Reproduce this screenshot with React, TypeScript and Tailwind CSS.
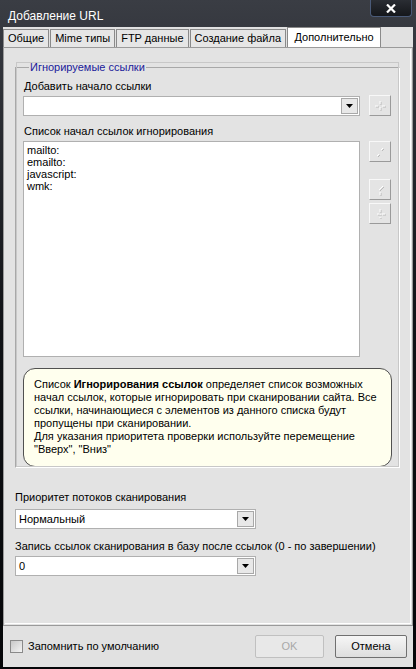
import React from "react";

const font = { fontFamily: '"Liberation Sans", "DejaVu Sans", sans-serif' };

function Arrow() {
	return (
		<svg width="7" height="4" viewBox="0 0 7 4">
			<path d="M0 0h7L3.5 4z" fill="#000" />
		</svg>
	);
}

function Combo({ value = "", width }: { value?: string; width: string }) {
	return (
		<div
			className={`${width} h-[20px] border border-[#b0b0b0] bg-white flex items-center p-[1px]`}
		>
			<div className="flex-1 pl-[2px] text-[11px] text-black">{value}</div>
			<div className="w-[17px] h-[16px] bg-[#e8e8e8] border border-[#a8a8a8] flex items-center justify-center">
				<Arrow />
			</div>
		</div>
	);
}

function ToolButton({ d }: { d: string }) {
	return (
		<div className="w-[22px] h-[21px] bg-[#e4e4e4] border border-t-[#f8f8f8] border-l-[#f8f8f8] border-r-[#9a9a9a] border-b-[#9a9a9a] flex items-center justify-center">
			<svg width="14" height="14" viewBox="0 0 14 14">
				<path d={d} stroke="#b8b8b8" strokeWidth="1" fill="none" transform="translate(1 1)" />
				<path d={d} stroke="#ffffff" strokeWidth="1" fill="none" />
			</svg>
		</div>
	);
}

const tabs = ["Общие", "Mime типы", "FTP данные", "Создание файла"];

export default function App() {
	return (
		<div
			className="w-[416px] h-[669px] bg-gradient-to-b from-[#3a3d44] via-[#101216] to-[#050608] flex flex-col text-[11px] leading-[13px]"
			style={font}
		>
			{/* title bar */}
			<div className="h-[27px] flex items-start shrink-0">
				<div className="pl-[8px] pt-[9px] text-white text-[12px] leading-[14px]">
					Добавление URL
				</div>
				<div className="ml-auto mr-[4px] w-[42px] h-[17px] rounded-b-[4px] border border-t-0 border-[#4a5a78] bg-gradient-to-b from-[#2a2d33] to-[#15171b] flex items-center justify-center">
					<svg width="10" height="9" viewBox="0 0 10 9">
						<path d="M1 0.5l8 8M9 0.5l-8 8" stroke="#fff" strokeWidth="2.2" />
					</svg>
				</div>
			</div>

			{/* body */}
			<div className="flex-1 mx-[3px] mb-[2px] bg-[#e1e1e1] flex flex-col">
				{/* tabs */}
				<div className="h-[20px] flex items-end shrink-0">
					{tabs.map((t) => (
						<div
							key={t}
							className="h-[18px] px-[4px] mr-[1px] bg-[#e6e6e6] border border-b-0 border-[#8a8a8a] flex items-center text-black"
						>
							{t}
						</div>
					))}
					<div className="h-[20px] w-[94px] bg-white border border-b-0 border-[#8a8a8a] flex items-start justify-center pt-[3px] text-black">
						Дополнительно
					</div>
				</div>

				{/* panel */}
				<div className="h-[579px] border border-[#9a9a9a] bg-[#e3e3e3] shrink-0 p-[1px]">
					<div className="h-full border border-white border-t-0 border-l-0 flex flex-col pl-[10px]">
						<fieldset className="mt-[12px] w-[385px] h-[407px] border border-t-[#a8a8a8] border-l-[#a8a8a8] border-r-white border-b-white outline outline-1 outline-offset-[-2px] outline-[#c8c8c8] pl-[7px] pr-[7px]">
							<legend className="ml-[6px] px-[1px] text-[#1a1a9a]">
								Игнорируемые ссылки
							</legend>
							<div className="mt-[6px] pl-[1px] text-black">Добавить начало ссылки</div>
							<div className="mt-[3px] flex items-start">
								<Combo width="w-[337px]" />
								<div className="ml-[9px] -mt-[1px]">
									<ToolButton d="M7 2v3M7 8v3M2 7h3M9 7h3" />
								</div>
							</div>
							<div className="mt-[9px] pl-[1px] text-black">
								Список начал ссылок игнорирования
							</div>
							<div className="mt-[3px] flex items-start">
								<div className="w-[337px] h-[216px] border border-[#b0b0b0] bg-white pl-[3px] pt-[2px] text-black leading-[12px]">
									<div>mailto:</div>
									<div>emailto:</div>
									<div>javascript:</div>
									<div>wmk:</div>
								</div>
								<div className="ml-[9px] flex flex-col">
									<ToolButton d="M10 3l-2 2M6 9l-2 2" />
									<div className="mt-[17px]">
										<ToolButton d="M10 3L6 7M7 9v3" />
									</div>
									<div className="mt-[3px]">
										<ToolButton d="M7 2v3M7 7v1M4 7h2M9 7h3M7 10v1" />
									</div>
								</div>
							</div>
							<div className="mt-[11px] w-[369px] h-[99px] rounded-[12px] border border-[#505050] bg-[#ffffee] pl-[10px] pt-[9px] text-black">
								Список <b>Игнорирования ссылок</b> определяет список возможных
								<br />
								начал ссылок, которые игнорировать при сканировании сайта. Все
								<br />
								ссылки, начинающиеся с элементов из данного списка будут
								<br />
								пропущены при сканировании.
								<br />
								Для указания приоритета проверки используйте перемещение
								<br />
								"Вверх", "Вниз"
							</div>
						</fieldset>

						<div className="mt-[23px] text-black">Приоритет потоков сканирования</div>
						<div className="mt-[5px]">
							<Combo value="Нормальный" width="w-[241px]" />
						</div>
						<div className="mt-[11px] text-black">
							Запись ссылок сканирования в базу после ссылок (0 - по завершении)
						</div>
						<div className="mt-[3px]">
							<Combo value="0" width="w-[241px]" />
						</div>
					</div>
				</div>

				{/* footer */}
				<div className="flex-1 flex items-center pl-[7px] pr-[6px]">
					<div className="w-[13px] h-[13px] border border-[#8a8a8a] bg-gradient-to-br from-[#c8c8c8] to-[#f4f4f4]" />
					<div className="ml-[5px] text-black">Запомнить по умолчанию</div>
					<div className="ml-auto w-[69px] h-[23px] rounded-[2px] border border-[#c0c0c0] bg-[#e8e8e8] flex items-center justify-center text-[#a8a8a8]">
						OK
					</div>
					<div className="ml-[11px] w-[72px] h-[23px] rounded-[2px] border border-[#707070] bg-gradient-to-b from-[#f6f6f6] to-[#dedede] flex items-center justify-center text-black">
						Отмена
					</div>
				</div>
			</div>
		</div>
	);
}
